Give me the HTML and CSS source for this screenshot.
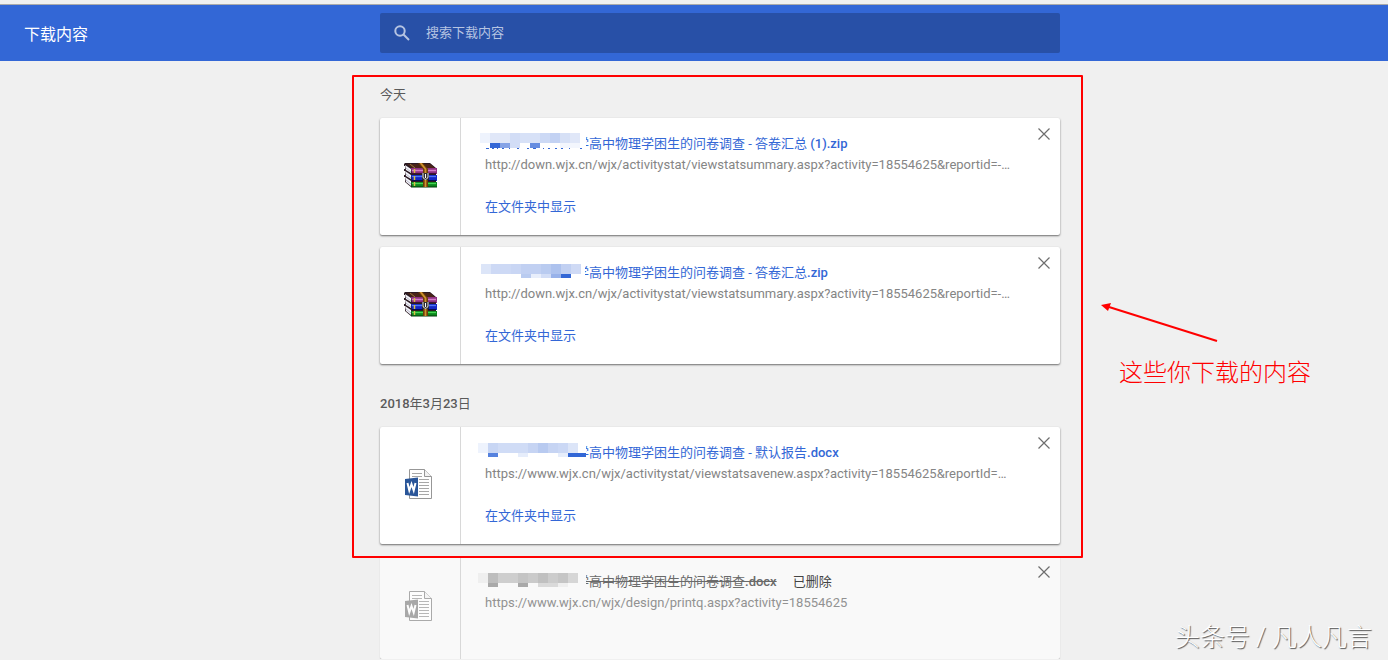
FILE: index.html
```html
<!DOCTYPE html>
<html lang="zh-CN">
<head>
<meta charset="utf-8">
<title>下载内容</title>
<link rel="stylesheet" href="styles.css">
</head>
<body>
<svg class="defs" aria-hidden="true">
  <symbol id="close" viewBox="0 0 12 12"><path d="M.5.5l11 11M11.5.5l-11 11" stroke="#6e6e6e" stroke-width="1.2" fill="none"/></symbol>
  <symbol id="zip" viewBox="0 0 33 25">
    <path d="M1 0H26L32 5V24H7L1 19V14H0V12H1V8H0V6H1V3H0V1Z" fill="#2a1a22"/>
    <path d="M1 2L7 6V10L2 7ZM1 8L7 12V16L2 13ZM1 14L7 18V23L2 19Z" fill="#f4f4fa"/>
    <path d="M2 5L7 9M2 11L7 15M2 17L7 21" stroke="#a9a9bd" stroke-width=".8" fill="none"/>
    <path d="M3 1H26L31 5H8Z" fill="#4a2418"/>
    <path d="M6 1L11 5" stroke="#9a7a38" fill="none"/>
    <path d="M7 5H33V11H8Z" fill="#8e3080"/><path d="M8 7.500H32" stroke="#d67cc8" stroke-width="1.500"/><path d="M8 10.500H32" stroke="#421038"/>
    <path d="M7 12H33V18H8Z" fill="#1426c4"/><path d="M8 13.500H32" stroke="#4f78f4" stroke-width="1.300"/><path d="M8 17.500H32" stroke="#060c50"/>
    <path d="M7 19H33V24H8Z" fill="#0b861c"/><path d="M8 20.500H32" stroke="#46d452" stroke-width="1.300"/><path d="M7 24H33" stroke="#053a0a"/>
    <path d="M10.500 6V10M10.500 13V17M10.500 19V23" stroke="#d8bf45" stroke-width="1.500"/>
    <path d="M14 0H19L24 6V24H19V6Z" fill="#6b3d08"/><path d="M16.500 0L21.500 6V24" stroke="#d0922f" stroke-width="1.800" fill="none"/>
    <path d="M18 10H25V17H18Z" fill="#2c2c30"/><path d="M19 10V14Q21.500 19 24 14V10" stroke="#c7c7c7" stroke-width="1.200" fill="none"/><path d="M21.500 11V15" stroke="#fff"/>
  </symbol>
  <symbol id="doc" viewBox="0 0 27 30">
    <path d="M4.500.5H19.500L26.500 7.500V29.500H4.500Z" fill="#fff" stroke="#979797"/>
    <path d="M19.500.5V7.500H26.500" fill="#f3f3f3" stroke="#979797"/>
    <path d="M7 4.500H17M7 7.500H17M14 10.500H24M14 13.500H24M14 16.500H24M14 19.500H24M14 22.500H24M14 25.500H24" stroke="#a7a7a7"/>
    <path d="M0 10L13 8.500V27.500L0 26Z" fill="currentColor"/>
    <path d="M2.500 14L4.300 21.500L6.500 15L8.700 21.500L10.500 14" stroke="#fff" stroke-width="2" fill="none"/>
  </symbol>
</svg>

<header class="toolbar">
  <h1 class="toolbar-title">下载内容</h1>
  <label class="search">
    <svg class="search-icon" viewBox="0 0 16 16" aria-hidden="true"><circle cx="6" cy="6" r="4.700"/><path d="M9.500 9.500L15 15"/></svg>
    <input class="search-input" type="search" placeholder="搜索下载内容" aria-label="搜索下载内容">
  </label>
</header>

<main class="downloads">
  <section class="recent">
    <h2 class="date date-today">今天</h2>
    <article class="card">
      <div class="file-icon"><svg class="zip-icon"><use href="#zip"/></svg></div>
      <div class="details">
        <div class="name"><a class="file-link" href="#">学高中物理学困生的问卷调查 - 答卷汇总 <b>(1).zip</b></a>
          <svg class="mask" viewBox="0 0 108 20" shape-rendering="crispEdges" aria-hidden="true">
            <path d="M0 0H108V20H0Z" fill="#fff"/>
            <path d="M2 1h10v10H2z" fill="#eef3fd"/><path d="M12 1h20v10H12z" fill="#e0e7f8"/><path d="M32 1h10v10H32z" fill="#d2ddf6"/><path d="M42 1h20v10H42z" fill="#d7e1f7"/><path d="M62 1h10v10H62z" fill="#ccd9f5"/><path d="M72 1h10v10H72z" fill="#c3d2f3"/><path d="M82 1h10v10H82z" fill="#d6e0f6"/><path d="M92 1h10v10H92z" fill="#e0e7f8"/>
            <path d="M12 11h10v5H12zM8 16h3v1H8zM14 16h2v1H14zM19 16h1v1H19zM24 16h2v1H24zM31 16h1v1H31zM39 16h2v1H39zM49 16h2v1H49zM55 16h3v1H55zM65 16h1v1H65zM70 16h2v1H70zM77 16h2v1H77zM83 16h2v1H83zM91 16h1v1H91zM102 16h2v1H102z" fill="#3367d6"/><path d="M22 11h10v5H22z" fill="#85a3e6"/><path d="M32 11h10v5H32z" fill="#d2ddf6"/><path d="M52 11h10v5H52z" fill="#658ce0"/><path d="M82 11h20v5H82z" fill="#f3f6fd"/>
          </svg></div>
        <div class="url">http://down.wjx.cn/wjx/activitystat/viewstatsummary.aspx?activity=18554625&amp;reportid=-…</div>
        <a class="show" href="#">在文件夹中显示</a>
      </div>
      <button class="close" type="button" aria-label="移除"><svg class="close-icon"><use href="#close"/></svg></button>
    </article>
    <article class="card">
      <div class="file-icon"><svg class="zip-icon"><use href="#zip"/></svg></div>
      <div class="details">
        <div class="name"><a class="file-link" href="#">学高中物理学困生的问卷调查 - 答卷汇总<b>.zip</b></a>
          <svg class="mask" viewBox="0 0 108 20" shape-rendering="crispEdges" aria-hidden="true">
            <path d="M0 0H107V20H0Z" fill="#fff"/>
            <path d="M3 3h10v10H3z" fill="#dce5f8"/><path d="M13 3h20v10H13z" fill="#cdd9f5"/><path d="M33 3h10v10H33z" fill="#c9d6f4"/><path d="M43 3h20v10H43z" fill="#c1d0f2"/><path d="M63 3h10v10H63z" fill="#b9cbf0"/><path d="M73 3h10v10H73z" fill="#adc2ee"/><path d="M83 3h10v10H83z" fill="#c1d0f2"/><path d="M93 3h10v10H93z" fill="#cfdaf5"/>
            <path d="M43 13h10v4H43z" fill="#b9cbf0"/><path d="M53 13h10v4H53z" fill="#e8eefb"/><path d="M63 13h10v4H63z" fill="#d2ddf6"/><path d="M73 13h10v4H73z" fill="#98b2ea"/><path d="M83 13h10v4H83z" fill="#3367d6"/>
          </svg></div>
        <div class="url">http://down.wjx.cn/wjx/activitystat/viewstatsummary.aspx?activity=18554625&amp;reportid=-…</div>
        <a class="show" href="#">在文件夹中显示</a>
      </div>
      <button class="close" type="button" aria-label="移除"><svg class="close-icon"><use href="#close"/></svg></button>
    </article>
    <h2 class="date"><b>2018</b>年<b>3</b>月<b>23</b>日</h2>
    <article class="card">
      <div class="file-icon"><svg class="doc-icon"><use href="#doc"/></svg></div>
      <div class="details">
        <div class="name"><a class="file-link" href="#">学高中物理学困生的问卷调查 - 默认报告<b>.docx</b></a>
          <svg class="mask" viewBox="0 0 108 20" shape-rendering="crispEdges" aria-hidden="true">
            <path d="M0 0H108V20H0Z" fill="#fff"/>
            <path d="M0 2h10v10H0z" fill="#eef3fd"/><path d="M10 2h10v10H10z" fill="#c8d6f4"/><path d="M20 2h30v10H20z" fill="#d0dcf6"/><path d="M50 2h10v10H50z" fill="#c6d4f3"/><path d="M60 2h10v10H60z" fill="#b8caf0"/><path d="M70 2h10v10H70z" fill="#c6d4f3"/><path d="M80 2h10v10H80z" fill="#cbd8f5"/><path d="M90 2h10v10H90z" fill="#dce5f8"/>
            <path d="M10 12h10v4H10z" fill="#5682de"/><path d="M40 12h10v4H40zM80 12h10v4H80z" fill="#e6edfb"/><path d="M90 12h18v4H90z" fill="#3367d6"/>
          </svg></div>
        <div class="url">https://www.wjx.cn/wjx/activitystat/viewstatsavenew.aspx?activity=18554625&amp;reportId=…</div>
        <a class="show" href="#">在文件夹中显示</a>
      </div>
      <button class="close" type="button" aria-label="移除"><svg class="close-icon"><use href="#close"/></svg></button>
    </article>
    <div class="frame"></div>
    <div class="note">
      <svg class="arrow" viewBox="0 0 118 40" aria-hidden="true"><path d="M8 4L116 38" stroke="#f00" stroke-width="2" fill="none"/><path d="M0 2L10 0L7 8Z" fill="#f00"/></svg>
      <p class="note-text">这些你下载的内容</p>
    </div>
  </section>

  <article class="card card-deleted">
    <div class="file-icon"><svg class="doc-icon"><use href="#doc"/></svg></div>
    <div class="details">
      <div class="name"><s class="file-gone">学高中物理学困生的问卷调查<b>.docx</b></s><span class="tag">已删除</span>
        <svg class="mask" viewBox="0 0 108 20" shape-rendering="crispEdges" aria-hidden="true">
          <path d="M0 0H109V20H0Z" fill="#f9f9f9"/>
          <path d="M0 3h10v10H0z" fill="#efefef"/><path d="M10 3h10v10H10z" fill="#bdbdbd"/><path d="M20 3h20v10H20z" fill="#cecece"/><path d="M40 3h10v10H40z" fill="#c4c4c4"/><path d="M50 3h10v10H50z" fill="#cacaca"/><path d="M60 3h10v10H60z" fill="#c0c0c0"/><path d="M70 3h10v10H70z" fill="#cccccc"/><path d="M80 3h10v10H80z" fill="#c5c5c5"/><path d="M90 3h10v10H90z" fill="#d6d6d6"/>
          <path d="M10 13h10v4H10zM40 13h10v4H40z" fill="#a9a9a9"/><path d="M60 13h20v4H60z" fill="#dadada"/><path d="M80 13h10v4H80z" fill="#efefef"/>
        </svg></div>
      <div class="url">https://www.wjx.cn/wjx/design/printq.aspx?activity=18554625</div>
    </div>
    <button class="close" type="button" aria-label="移除"><svg class="close-icon"><use href="#close"/></svg></button>
  </article>
</main>
<p class="watermark">头条号 / 凡人凡言</p>
</body>
</html>
```
FILE: styles.css
```css
* { box-sizing: border-box; }
body {
  margin: 0;
  padding-top: 4px;
  background: #f0f0f0;
  color: #5a5a5a;
  font: 13px/20px Roboto, "Noto Sans CJK SC", sans-serif;
}
h1, h2, p { margin: 0; font-weight: 400; }
b { font-weight: 500; }
a { text-decoration: none; color: #3367d6; }
svg { display: block; flex: none; }
.defs { position: absolute; width: 0; height: 0; }

.toolbar {
  display: grid;
  grid-template-columns: calc(50% - 314px) minmax(0, 680px);
  align-items: center;
  padding: 8px 0;
  border-top: 1px solid #aaaaaa;
  background: #3367d6;
}
.toolbar-title { padding: 4px 0 0 24px; font-size: 16px; color: #fff; }
.search {
  display: flex;
  align-items: center;
  gap: 16px;
  height: 40px;
  padding: 0 14px;
  border-radius: 2px;
  background: #2850a7;
}
.search-icon { width: 16px; height: 16px; fill: none; stroke: #b6c4e2; stroke-width: 2; }
.search-input {
  flex: 1;
  min-width: 0;
  padding: 0;
  border: 0;
  outline: 0;
  background: none;
  color: #fff;
  font: inherit;
}
.search-input::placeholder { color: #b6c4e2; opacity: 1; }

.downloads {
  width: 680px;
  max-width: 100%;
  margin-left: calc(50% - 314px);
}
.recent { position: relative; padding-top: 24px; }
.date { margin: 30px 0 13px; font-size: 13px; }
.date-today { margin-top: 0; }

.card {
  display: flex;
  min-height: 103px;
  margin-bottom: 12px;
  border-radius: 2px;
  background: #fff;
  box-shadow: 0 1px 2px rgba(0, 0, 0, .55);
}
.file-icon {
  display: flex;
  flex: none;
  align-items: center;
  justify-content: center;
  width: 81px;
  padding-bottom: 3px;
  border-right: 1px solid #d8d8d8;
}
.zip-icon { width: 33px; height: 25px; }
.doc-icon { width: 27px; height: 30px; margin-right: 3px; color: #2a5699; }
.details { flex: 1; min-width: 0; padding: 17px 16px 18px 24px; }
.name {
  position: relative;
  padding-left: 91px;
  line-height: 18px;
  white-space: nowrap;
}
.mask { position: absolute; top: -3px; left: -7px; width: 108px; height: 20px; }
.url {
  overflow: hidden;
  line-height: 24px;
  color: #858585;
  white-space: nowrap;
  text-overflow: ellipsis;
}
.show { display: block; width: max-content; margin-top: 20px; }
.close {
  display: grid;
  flex: none;
  place-items: center;
  width: 32px;
  height: 32px;
  padding: 0;
  border: 0;
  background: none;
}
.close-icon { width: 12px; height: 12px; }
.card-deleted { margin-bottom: 0; background: #f9f9f9; box-shadow: 0 1px 1px rgba(0, 0, 0, .25); }
.card-deleted .doc-icon { color: #959595; opacity: .8; }
.card-deleted .url { color: #929292; }
.file-gone { color: #6a6a6a; }
.tag { margin-left: 16px; color: #444; }

.frame {
  position: absolute;
  top: 14px;
  right: -23px;
  bottom: -14px;
  left: -28px;
  border: 2px solid #f00;
  border-radius: 1px;
  pointer-events: none;
}
.note { position: absolute; top: 242px; left: calc(100% + 41px); }
.arrow { width: 118px; height: 40px; }
.note-text {
  margin: 12px 0 0 18px;
  font-size: 24px;
  line-height: 36px;
  font-weight: 300;
  color: #f00;
  white-space: nowrap;
}
.watermark {
  position: absolute;
  right: 16px;
  bottom: 4px;
  font-size: 25px;
  line-height: 36px;
  font-weight: 300;
  color: #fff;
  text-shadow: 1px 1px 1px #555;
}
```
